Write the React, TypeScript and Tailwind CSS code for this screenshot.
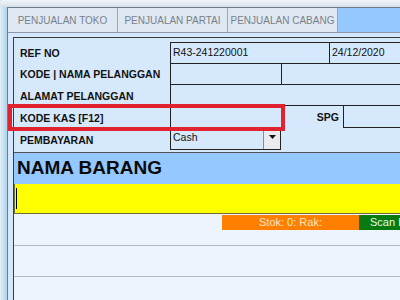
import { ReactNode } from "react";

const tabs = ["PENJUALAN TOKO", "PENJUALAN PARTAI", "PENJUALAN CABANG"];

function Label({ children }: { children: ReactNode }) {
  return (
    <div className="w-[156px] shrink-0 pl-[6px] pt-[3px] flex items-center font-bold text-[10.5px] text-[#111] whitespace-nowrap">
      {children}
    </div>
  );
}

export default function App() {
  return (
    <div
      className="w-[400px] h-[300px] overflow-hidden flex flex-col bg-[#d9e6ef]"
      style={{ fontFamily: '"Liberation Sans", Arial, sans-serif' }}
    >
      {/* window frame top */}
      <div className="h-[7px] shrink-0 bg-gradient-to-b from-[#f4f6f8] to-[#d4e0ea] rounded-tl-[4px]" />
      <div className="flex flex-1 min-h-0">
        {/* window frame left */}
        <div className="w-[7px] shrink-0 bg-gradient-to-r from-[#e2eff5] to-[#aed2ec]" />
        <div className="flex-1 min-w-0 flex flex-col border-l border-t border-[#6b7b8b]">
          {/* tab strip */}
          <div className="h-[25px] shrink-0 flex bg-[#94c8ff] border-b border-[#8a98a6]">
            {tabs.map((t) => (
              <div
                key={t}
                className="w-[110px] shrink-0 flex items-center justify-center bg-[#dee8f3] border-r border-[#9ea7b1] text-[10px] text-[#7b8088] whitespace-nowrap"
              >
                {t}
              </div>
            ))}
          </div>

          {/* content */}
          <div className="flex-1 min-h-0 bg-[#d5e7fa] pl-[5px] pt-[4px] flex">
            <div className="flex-1 min-w-0 flex flex-col border-l border-t border-[#3c3c3c]">
              {/* form */}
              <div className="bg-[#d6e8fb] pt-[4px] pb-[2px] flex flex-col text-[10.5px] text-[#111]">
                <div className="h-[21px] flex">
                  <Label>REF NO</Label>
                  <div className="w-[159px] shrink-0 border-l border-t border-[#222] pl-[2px] flex items-center">
                    R43-241220001
                  </div>
                  <div className="flex-1 border-l border-t border-[#222] pl-[2px] flex items-center">
                    24/12/2020
                  </div>
                </div>

                <div className="h-[21px] flex">
                  <Label>KODE | NAMA PELANGGAN</Label>
                  <div className="w-[111px] shrink-0 border-l border-t border-[#222]" />
                  <div className="flex-1 border-l border-t border-[#222]" />
                </div>

                <div className="h-[22px] flex">
                  <Label>ALAMAT PELANGGAN</Label>
                  <div className="flex-1 border-l border-t border-b border-[#222]" />
                </div>

                <div className="h-[22px] flex relative">
                  <div className="absolute left-[-6px] top-[-2px] w-[277px] h-[27px] border-[4px] border-[#e0232e] pointer-events-none" />
                  <Label>KODE KAS [F12]</Label>
                  <div className="w-[112px] shrink-0 border-l border-[#222]" />
                  <div className="w-[61px] shrink-0 pr-[4px] pt-[2px] flex items-center justify-end font-bold">
                    SPG
                  </div>
                  <div className="flex-1 border-l border-b border-[#222]" />
                </div>

                <div className="h-[22px] flex">
                  <Label>PEMBAYARAN</Label>
                  <div className="w-[111px] shrink-0 flex border-l border-t border-b border-r border-[#222]">
                    <div className="flex-1 pl-[2px] pb-[2px] flex items-center">Cash</div>
                    <div className="w-[17px] shrink-0 bg-[#e9ebee] border-l border-[#8d8d8d] flex items-start justify-center pt-[6px]">
                      <svg width="7" height="4" viewBox="0 0 7 4">
                        <path d="M0 0H7L3.5 4Z" fill="#111" />
                      </svg>
                    </div>
                  </div>
                </div>
              </div>

              {/* header */}
              <div className="h-[32px] shrink-0 bg-[#94c8ff] border-t border-[#555] pl-[3px] flex items-center font-bold text-[19px] text-[#0a0a0a]">
                NAMA BARANG
              </div>

              {/* yellow input */}
              <div className="h-[30px] shrink-0 bg-[#ffff00] border-l border-b border-[#6f6d36] flex items-center">
                <span className="w-px h-[21px] bg-black ml-[1px]" />
              </div>

              {/* grid rows */}
              <div className="flex-1 bg-[#edf4fd] flex flex-col">
                <div className="h-[32px] shrink-0 border-b border-[#b3bac3] pt-[1px]">
                  <div className="h-[15px] flex text-[11px] whitespace-nowrap overflow-hidden">
                    <div className="w-[208px] shrink-0" />
                    <div className="w-[137px] shrink-0 bg-[#ff7f00] text-[#ffe6c8] flex items-center justify-center">
                      Stok: 0: Rak:
                    </div>
                    <div className="flex-1 bg-[#087a10] text-[#e6ffe6] pl-[11px] flex items-center overflow-hidden">
                      Scan Barcode
                    </div>
                  </div>
                </div>
                <div className="h-[31px] shrink-0 border-b border-[#b3bac3]" />
                <div className="h-[31px] shrink-0 border-b border-[#b3bac3]" />
              </div>
            </div>
          </div>
        </div>
      </div>
    </div>
  );
}
